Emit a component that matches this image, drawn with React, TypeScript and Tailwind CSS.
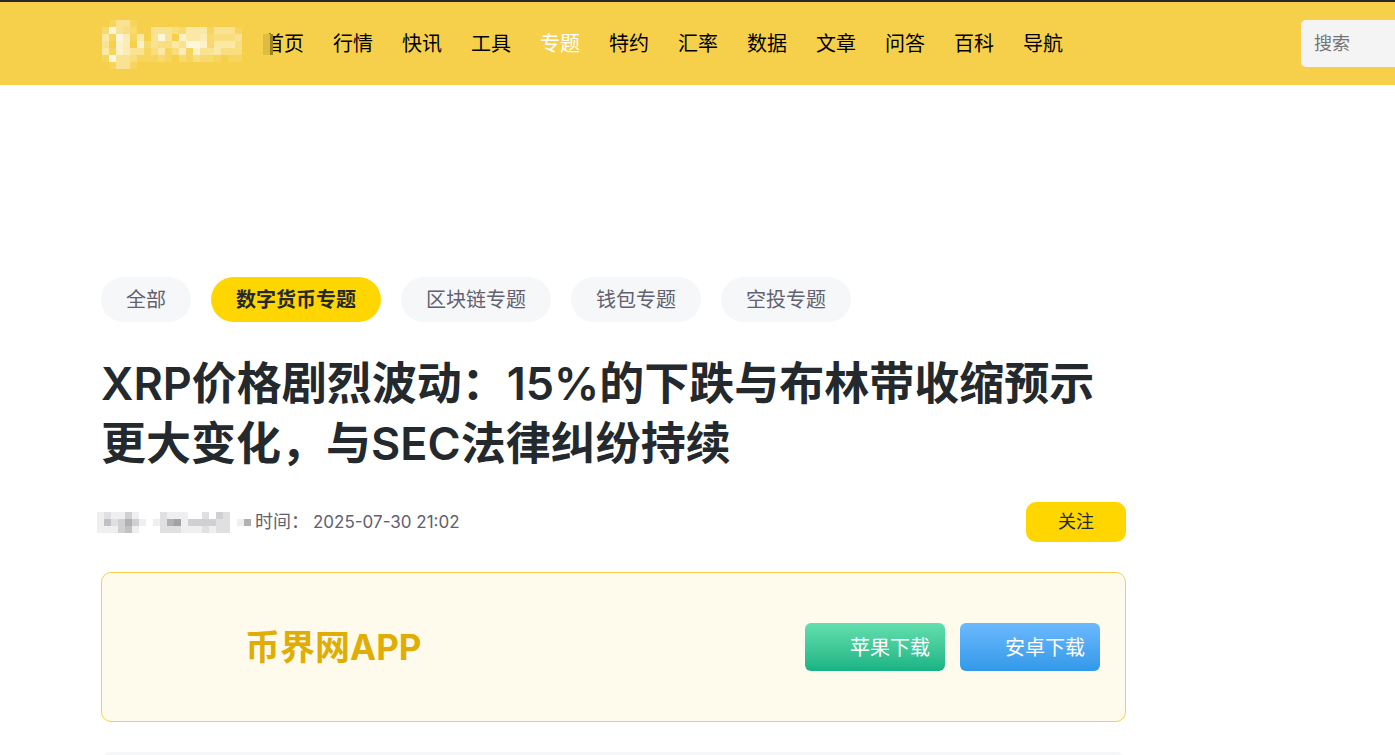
const navItems = ["首页", "行情", "快讯", "工具", "专题", "特约", "汇率", "数据", "文章", "问答", "百科", "导航"];

const topics = ["全部", "数字货币专题", "区块链专题", "钱包专题", "空投专题"];

// one digit per tile, 0 = clear, 9 = solid
const logoTiles = [
  "01441000000000000000",
  "28432004443255514441",
  "51861504840755623334",
  "40760724335488725553",
  "51764413513617445333",
  "18443111210213221011",
  "01441000000000000000"
];

const authorTiles = [
  "1211310002111002032000",
  "1423531012561333322015",
  "1113410002221112122000"
];

type MosaicProps = {
  tiles: string[];
  size: number;
  label: string;
  className: string;
};

function Mosaic({ tiles, size, label, className }: MosaicProps) {
  const width = tiles[0].length * size;
  const height = tiles.length * size;

  return (
    <svg role="img" aria-label={label} width={width} height={height} viewBox={`0 0 ${width} ${height}`} className={className} shapeRendering="crispEdges">
      {tiles.map((row, y) =>
        row.split("").map((tile, x) => (
          <rect key={`${x}-${y}`} x={x * size} y={y * size} width={size} height={size} fill="currentColor" fillOpacity={Number(tile) / 10} />
        ))
      )}
    </svg>
  );
}

export default function App() {
  return (
    <div className="min-h-screen overflow-hidden bg-white font-['Inter','Noto_Sans_CJK_SC',sans-serif] text-[#23292d]">
      <header className="flex items-start border-t-2 border-[#292929] bg-[#f6d04a] pt-[18px] pb-4 pl-[102px]">
        <a href="#" className="shrink-0">
          <Mosaic tiles={logoTiles} size={7} label="币界网" className="text-white" />
        </a>
        <nav className="relative ml-[22px] flex gap-[29px] text-xl leading-[49px] whitespace-nowrap text-black">
          {navItems.map((item) => (
            <a key={item} href="#" className={item === "专题" ? "text-white" : ""}>
              {item}
            </a>
          ))}
          <span className="absolute top-[14px] -left-px h-[21px] w-[10px] border-r-[3px] border-[#9c841c] bg-[#dcbc42]" />
        </nav>
        <input
          type="search"
          aria-label="搜索"
          placeholder="搜索"
          className="ml-auto h-[47px] w-[94px] shrink-0 rounded-l-[5px] bg-[#f4f4f4] px-[13px] text-lg outline-none placeholder:text-[#757575]"
        />
      </header>

      <main className="mt-48 ml-[101px] max-w-[1025px]">
        <div className="flex gap-5 text-xl">
          {topics.map((topic) => (
            <button
              key={topic}
              type="button"
              className={`h-[45px] rounded-full px-[25px] ${
                topic === "数字货币专题" ? "bg-[#ffd600] font-bold" : "bg-[#f6f7f9] text-[#616170]"
              }`}
            >
              {topic}
            </button>
          ))}
        </div>

        <h1 className="mt-8 text-[45px] leading-[60px] font-semibold">
          XRP价格剧烈波动：15%的下跌与布林带收缩预示更大变化，与SEC法律纠纷持续
        </h1>

        <div className="mt-7 flex h-10 items-center gap-1 text-lg text-[#616170]">
          <Mosaic tiles={authorTiles} size={7} label="作者" className="-ml-1 text-[#62646c]" />
          <span>时间：</span>
          <time className="text-[17px]">2025-07-30 21:02</time>
          <button type="button" className="ml-auto h-10 w-[100px] rounded-[10px] bg-[#ffd600] text-[#23292d]">
            关注
          </button>
        </div>

        <section className="mt-[30px] flex h-[150px] items-center rounded-[10px] border border-[#f6d04a] bg-[#fffbec] pr-[25px] pl-[143px]">
          <h2 className="text-[35px] font-bold text-[#e0ad05]">币界网APP</h2>
          <div className="ml-auto flex gap-[15px] text-xl text-white">
            <a href="#" className="flex h-12 w-[140px] items-center justify-end rounded-md bg-linear-to-b from-[#62dfae] to-[#15b384] pt-0.5 pr-[15px]">
              苹果下载
            </a>
            <a href="#" className="flex h-12 w-[140px] items-center justify-end rounded-md bg-linear-to-b from-[#6bb9fe] to-[#3099e8] pt-0.5 pr-[15px]">
              安卓下载
            </a>
          </div>
        </section>

        <section className="mt-[30px] h-10 rounded-[10px] bg-[#f6f7f9]" />
      </main>
    </div>
  );
}
